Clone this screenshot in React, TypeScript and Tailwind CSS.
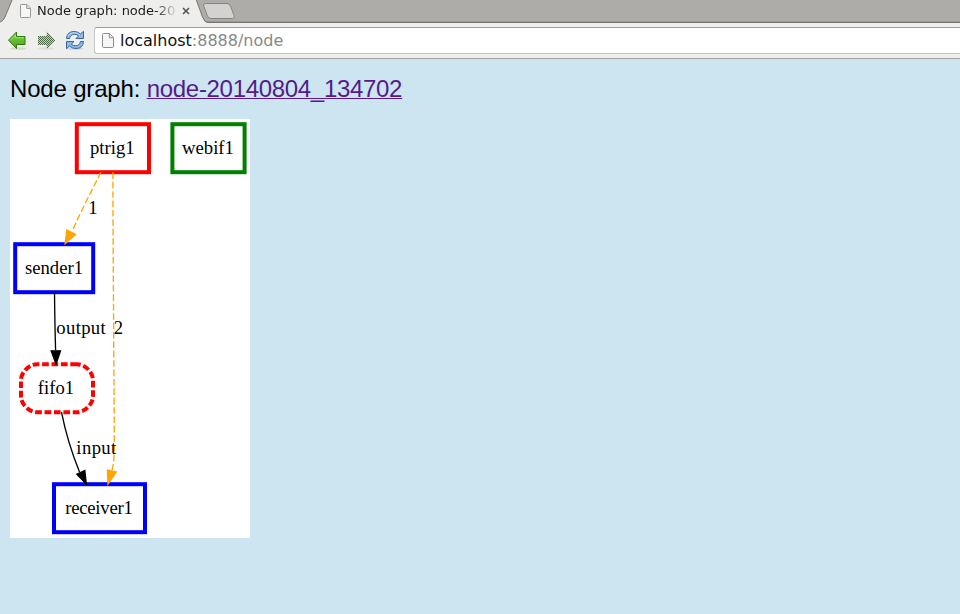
import React from 'react';

function PageIcon({ className }: { className: string }) {
  return (
    <svg className={className} viewBox="0 0 12 15" preserveAspectRatio="none" fill="none">
      <path d="M1.500.5H7.500L11.500 4.500V13.500Q11.500 14.500 10.500 14.500H1.500Q.5 14.500 .5 13.500V1.500Q.5.5 1.500.5z" fill="#f6f6f6" stroke="#8e8e8e" />
      <path d="M7.300.9v3.900h4" fill="#e4e4e4" stroke="#8e8e8e" />
    </svg>
  );
}

function TabStrip() {
  return (
    <div className="relative h-[23px] bg-[#adaca9]">
      <svg className="absolute inset-0" width="960" height="23" viewBox="0 0 960 23" fill="none">
        <path d="M0 21.500h960" stroke="#999895" />
        <path d="M0 22.500h960" stroke="#777674" />
        <path d="M-2 23V22.500C2 22 3.500 20 5 17L12.500 -1H196L202.500 17Q204.500 22.500 208 22.500V23z" fill="#eeeeec" />
        <path d="M-2 22.500C2 22 3.500 20 5 17L12.500 -1M196 -1L202.500 17Q204.500 22.500 208 22.500" stroke="#777674" />
        <path d="M206.500 3.500H227Q229.500 3.500 230.500 6L234 15.500Q235 18.500 232.500 18.500H211Q208.500 18.500 207.500 16L203.700 6Q202.700 3.500 206.500 3.500z" fill="#d3d2d0" stroke="#868583" />
      </svg>
      <div className="relative flex h-[22px] w-[200px] items-center pl-5">
        <PageIcon className="h-[14px] w-[11px] shrink-0" />
        <span className="ml-[6px] w-[138px] overflow-hidden whitespace-nowrap bg-[linear-gradient(90deg,#1b1b1b_85%,#1b1b1b22_100%)] bg-clip-text font-['DejaVu_Sans',sans-serif] text-[13px] leading-[20px] text-transparent">
          Node graph: node-20
        </span>
        <svg className="ml-[7px] h-[8px] w-[8px] shrink-0" viewBox="0 0 8 8">
          <path d="M1 1l6 6M7 1L1 7" stroke="#555" strokeWidth="1.600" />
        </svg>
      </div>
    </div>
  );
}

function Toolbar() {
  return (
    <div className="flex h-9 items-start border-b border-[#a5a4a2] bg-[#eeeeec] pl-[7px]">
      <svg className="mt-[7px] h-[20px] w-[80px] shrink-0" viewBox="7 30 80 20" fill="none">
        <defs>
          <linearGradient id="green" x1="0" y1="0" x2="0" y2="1">
            <stop offset="0" stopColor="#83d346" />
            <stop offset="1" stopColor="#47a51b" />
          </linearGradient>
          <pattern id="check" width="2" height="2" patternUnits="userSpaceOnUse">
            <rect width="1" height="1" fill="#4d6b46" />
            <rect x="1" y="1" width="1" height="1" fill="#4d6b46" />
          </pattern>
        </defs>
        <ellipse cx="18" cy="48.500" rx="8" ry="1.300" fill="#d5d5d2" />
        <path d="M8.500 40.200L16.500 32V36.500H25V44.500H16.500V48.500z" fill="url(#green)" stroke="#2f780c" strokeLinejoin="round" />
        <path d="M10.500 40.200L15.500 35.200V37.700H24" stroke="#b0e77f" strokeWidth=".8" />
        <ellipse cx="46" cy="48.500" rx="8" ry="1.300" fill="#deded9" />
        <path d="M55 40.200L46.500 31V36H38V45H46.500V49.500z" fill="#c5d0bf" />
        <path d="M55 40.200L46.500 31V36H38V45H46.500V49.500z" fill="url(#check)" shapeRendering="crispEdges" />
        <ellipse cx="75" cy="48.700" rx="8.500" ry="1.200" fill="#d5d5d2" />
        <path d="M66.500 38.500Q67 31.500 74 31.500Q78 31.500 80.500 34L83.500 31.300V38.500H76L78.700 35.800Q77 34.300 74.500 34.300Q70.500 34.300 69.500 38.500z" fill="#91b9e5" stroke="#3267a8" strokeLinejoin="round" />
        <path d="M83.500 41.500Q83 48.500 76 48.500Q72 48.500 69.500 46L66.500 48.700V41.500H74L71.300 44.200Q73 45.700 75.500 45.700Q79.500 45.700 80.500 41.500z" fill="#91b9e5" stroke="#3267a8" strokeLinejoin="round" />
        <path d="M68 36Q69.500 32.700 74 32.700Q77.500 32.700 80 35" stroke="#c8def5" strokeWidth=".8" />
      </svg>
      <div className="ml-[7px] mt-[4px] flex h-[27px] flex-1 items-center rounded-l-[3px] border border-r-0 border-[#c4c4c2] border-t-[#9b9b99] bg-white pl-[7px]">
        <PageIcon className="h-[15px] w-[12px] shrink-0" />
        <span className="ml-[6px] whitespace-nowrap font-['DejaVu_Sans',sans-serif] text-[16px] leading-[24px] text-[#888]">
          <span className="text-[#111]">localhost</span>:8888/node
        </span>
      </div>
    </div>
  );
}

function Graph() {
  return (
    <svg
      className="mt-[15px] block h-[419px] w-[240px] bg-white font-['Liberation_Serif',serif] text-[18.67px]"
      viewBox="10 119 240 419"
      fill="none"
    >
      <g strokeWidth="4">
        <rect x="76.800" y="124.200" width="72.200" height="48" stroke="red" />
        <rect x="172.400" y="124.200" width="72.200" height="48" stroke="green" />
        <rect x="15.200" y="244.200" width="78" height="48" stroke="blue" />
        <rect x="54" y="484.200" width="91" height="48" stroke="blue" />
        <path
          d="M77 364.200H37C29 364.200 21 372.200 21 380.200V396.200C21 404.200 29 412.200 37 412.200H77C85 412.200 93 404.200 93 396.200V380.200C93 372.200 85 364.200 77 364.200"
          stroke="red"
          strokeDasharray="6.700 2.700"
        />
      </g>
      <g strokeWidth="1.330">
        <path d="M101 172.200C93 188 81.500 210 72.500 230.500" stroke="orange" strokeDasharray="6.700 2.700" />
        <path d="M112.900 172.200C113 240 113.500 290 113.800 360C114 390 114.400 420 114.200 452Q114 462 112.200 470" stroke="orange" strokeDasharray="6.700 2.700" />
        <path d="M54.500 292.200C54.700 310 55 330 55.600 350" stroke="black" />
        <path d="M61.500 412.200C65 430 71 451 79.500 472" stroke="black" />
      </g>
      <g strokeWidth="1.330">
        <path d="M65.200 243.500L66.800 230L75.600 234.300z" fill="orange" stroke="orange" />
        <path d="M108 484L107.500 470L116.300 472z" fill="orange" stroke="orange" />
        <path d="M56 364L51.200 350.800H60.500z" fill="black" stroke="black" />
        <path d="M86.300 484L76.800 474.200L84.800 470.400z" fill="black" stroke="black" />
      </g>
      <g fill="black" textAnchor="middle">
        <text x="112.300" y="154">ptrig1</text>
        <text x="208" y="154">webif1</text>
        <text x="93" y="214">1</text>
        <text x="54" y="274">sender1</text>
        <text x="81" y="334" textLength="49.500">output</text>
        <text x="118.500" y="334">2</text>
        <text x="56" y="394">fifo1</text>
        <text x="96.300" y="454" textLength="40">input</text>
        <text x="99" y="514" textLength="67.500">receiver1</text>
      </g>
    </svg>
  );
}

export default function App() {
  return (
    <div className="flex h-[614px] w-[960px] flex-col overflow-hidden bg-[#cde5f0]">
      <TabStrip />
      <Toolbar />
      <main className="flex flex-col px-[10px] pt-[15px]">
        <h1 className="h-[30px] whitespace-nowrap font-['Liberation_Sans',Arial,sans-serif] text-[24px] leading-[30px] tracking-[-0.17px] text-black">
          Node graph:{' '}
          <a href="#" className="tracking-[-0.31px] text-[#551a8b] underline decoration-1 underline-offset-1 [text-decoration-skip-ink:none]">
            node-20140804_134702
          </a>
        </h1>
        <Graph />
      </main>
    </div>
  );
}
